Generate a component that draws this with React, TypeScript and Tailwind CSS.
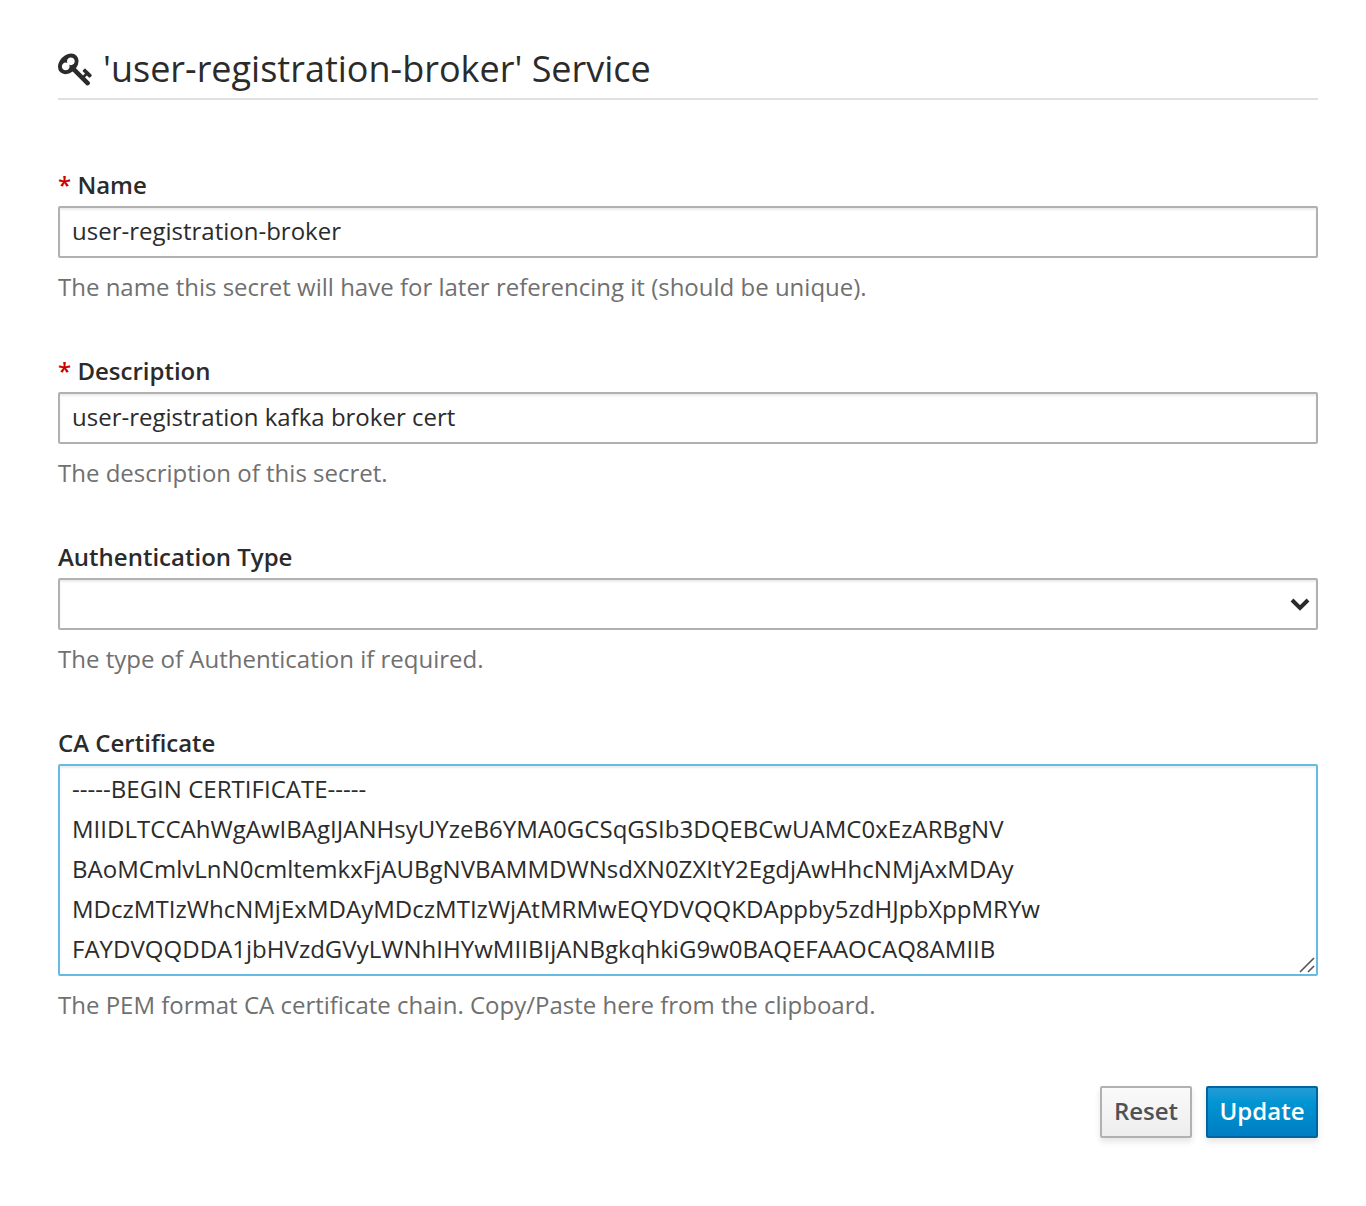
import type { ReactNode } from 'react';

const certificate = `-----BEGIN CERTIFICATE-----
MIIDLTCCAhWgAwIBAgIJANHsyUYzeB6YMA0GCSqGSIb3DQEBCwUAMC0xEzARBgNV
BAoMCmlvLnN0cmltemkxFjAUBgNVBAMMDWNsdXN0ZXItY2EgdjAwHhcNMjAxMDAy
MDczMTIzWhcNMjExMDAyMDczMTIzWjAtMRMwEQYDVQQKDAppby5zdHJpbXppMRYw
FAYDVQQDDA1jbHVzdGVyLWNhIHYwMIIBIjANBgkqhkiG9w0BAQEFAAOCAQ8AMIIB`;

function KeyIcon() {
  return (
    <svg viewBox="0 0 1792 1792" className="mr-[9px] h-9 w-9 shrink-0" fill="currentColor" aria-hidden="true">
      <path d="M832 512q0-80-56-136t-136-56-136 56-56 136q0 42 19 83-41-19-83-19-80 0-136 56t-56 136 56 136 136 56 136-56 56-136q0-42-19-83 41 19 83 19 80 0 136-56t56-136zm851 704q0 17-49 66t-66 49q-9 0-28.500-16t-36.500-33-38.500-40-24.500-26l-96 96 220 220q28 28 28 68 0 42-39 81t-81 39q-40 0-68-28l-671-671q-176 131-365 131-163 0-265.500-102.500t-102.500-265.500q0-160 95-313t248-248 313-95q163 0 265.500 102.500t102.500 265.500q0 189-131 365l355 355 96-96q-3-3-26-24.500t-40-38.500-33-36.500-16-28.500q0-17 49-66t66-49q13 0 23 10 6 6 46 44.500t82 79.500 86.500 86 73 78 28.500 41z" />
    </svg>
  );
}

function Field({ label, help, required, children }: { label: string; help: string; required?: boolean; children: ReactNode }) {
  return (
    <div className="mb-11">
      <label className="block h-10 font-semibold leading-[38px]">
        {required && <span className="text-[#cc0000]">* </span>}
        {label}
      </label>
      {children}
      <p className="mt-[10px] h-10 leading-[38px] text-[#707070]">{help}</p>
    </div>
  );
}

const control =
  'block w-full rounded-[2px] border-2 border-[#b1b1b1] bg-white px-3 shadow-[inset_0_2px_2px_rgba(3,3,3,0.075)] outline-none';

export default function App() {
  return (
    <main className="min-h-[1206px] bg-white px-12 pl-[58px] pt-[46px] font-['Open_Sans',sans-serif] text-[24px] text-[#2b2b2b]">
      <h1 className="flex h-[54px] items-center border-b-2 border-[#e0e0e0] pb-1.5 text-[36px] leading-[46px]">
        <KeyIcon />
        <span>'user-registration-broker' Service</span>
      </h1>
      <form className="pt-[66px]">
        <Field label="Name" required help="The name this secret will have for later referencing it (should be unique).">
          <input className={`${control} h-[52px] pb-[3px]`} defaultValue="user-registration-broker" />
        </Field>
        <Field label="Description" required help="The description of this secret.">
          <input className={`${control} h-[52px] pb-[3px]`} defaultValue="user-registration kafka broker cert" />
        </Field>
        <Field label="Authentication Type" help="The type of Authentication if required.">
          <div className={`${control} flex h-[52px] items-center justify-end pr-[6px]`}>
            <svg viewBox="0 0 20 14" className="h-[14px] w-5" fill="none" stroke="currentColor" strokeWidth="4" aria-hidden="true">
              <path d="M2 3l8 8 8-8" />
            </svg>
          </div>
        </Field>
        <Field label="CA Certificate" help="The PEM format CA certificate chain. Copy/Paste here from the clipboard.">
          <div className="relative">
            <textarea
              className="block h-[212px] w-full resize-none overflow-hidden whitespace-pre rounded-[2px] border-2 border-[#66bbe3] bg-white px-3 pb-1 pt-[3px] leading-10 tracking-[0.025px] shadow-[inset_0_2px_2px_rgba(3,3,3,0.075)] outline-none"
              defaultValue={certificate}
            />
            <svg viewBox="0 0 16 16" className="absolute bottom-[3px] right-[3px] h-4 w-4" stroke="#555" strokeWidth="1.6" aria-hidden="true">
              <path d="M1 15L15 1M9 15l6-6" />
            </svg>
          </div>
        </Field>
        <div className="flex justify-end gap-[14px] pt-4 font-semibold leading-10">
          <button
            type="button"
            className="h-[52px] w-[92px] rounded-[2px] border-2 border-[#b1b1b1] bg-linear-to-b from-[#fafafa] to-[#ededed] pb-0.5 text-[#4d5258] shadow-[0_4px_6px_rgba(3,3,3,0.1)]"
          >
            Reset
          </button>
          <button
            type="button"
            className="h-[52px] w-[112px] rounded-[2px] border-2 border-[#00659c] bg-linear-to-b from-[#39a5dc] from-[-40%] via-[#0095d3] via-30% to-[#007dc3] pb-0.5 text-white shadow-[0_4px_6px_rgba(3,3,3,0.1)]"
          >
            Update
          </button>
        </div>
      </form>
    </main>
  );
}
